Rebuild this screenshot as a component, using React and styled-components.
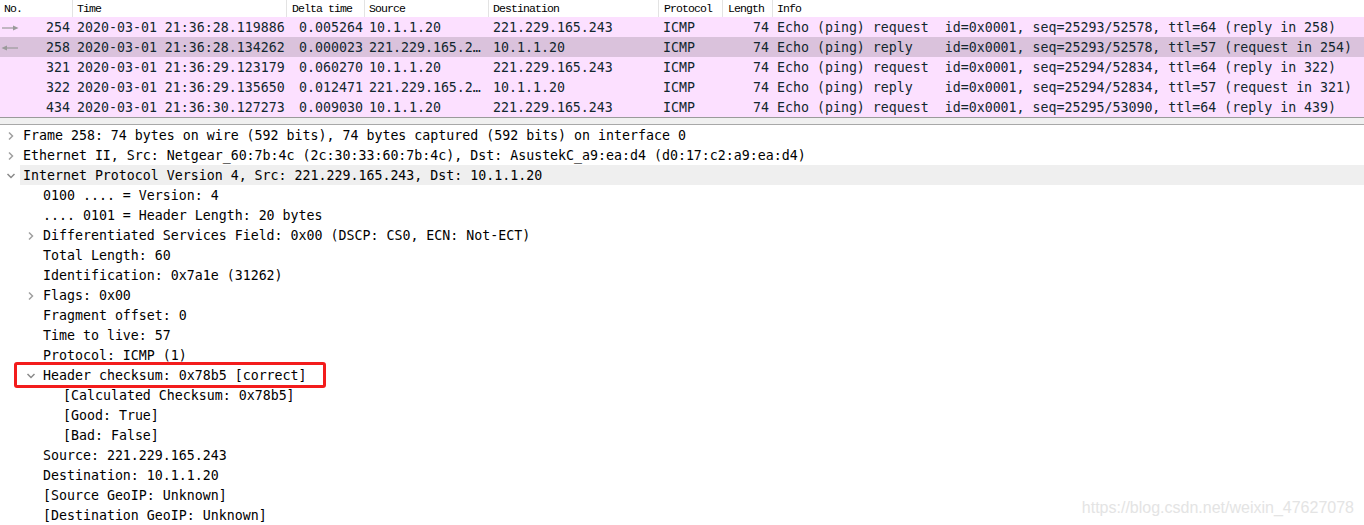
import React from "react";
import styled, { createGlobalStyle } from "styled-components";

const Global = createGlobalStyle`
  html, body { margin: 0; padding: 0; background: #ffffff; }
  body { width: 1364px; height: 525px; overflow: hidden; }
  #root { width: 1364px; height: 525px; }
`;

const Page = styled.div`
  position: relative;
  width: 1364px;
  height: 525px;
  display: flex;
  flex-direction: column;
  background: #ffffff;
  overflow: hidden;
`;

const COLS = "73px 214px 78px 124px 170px 64px 50px 1fr";

const ListPane = styled.div`
  display: flex;
  flex-direction: column;
  border-bottom: 1px solid #9a9a9a;
  background: #ffffff;
`;

const HeaderRow = styled.div`
  display: grid;
  grid-template-columns: ${COLS};
  height: 17px;
  background: #ffffff;
`;

const HeaderCell = styled.div`
  font-family: "Liberation Mono", monospace;
  font-size: 11.5px;
  letter-spacing: -0.9px;
  line-height: 17px;
  color: #000;
  padding-left: ${(p) => p.$pl ?? 4}px;
  border-right: ${(p) => (p.$last ? "none" : "1px solid #e3e3e3")};
  white-space: nowrap;
  overflow: hidden;
`;

const PacketRow = styled.div`
  display: grid;
  grid-template-columns: ${COLS};
  height: 20px;
  background: ${(p) => (p.$selected ? "#dac2dc" : "#fce0ff")};
  color: #12272e;
  font-family: "DejaVu Sans Mono", monospace;
  font-size: 13.28px;
  line-height: 22px;
`;

const Cell = styled.div`
  white-space: pre;
  overflow: hidden;
  text-overflow: ellipsis;
  text-align: ${(p) => (p.$right ? "right" : "left")};
  padding: 0 ${(p) => p.$pr ?? 4}px 0 ${(p) => p.$pl ?? 4}px;
`;

const NoCell = styled.div`
  display: flex;
  align-items: center;
  justify-content: space-between;
  padding: 0 3px 0 1px;
`;

const Splitter = styled.div`
  height: 7px;
  background: #f0f0f0;
  border-bottom: 1px solid #a8a8a8;
`;

const DetailPane = styled.div`
  display: flex;
  flex-direction: column;
  background: #ffffff;
  font-family: "DejaVu Sans Mono", monospace;
  font-size: 13.28px;
  color: #000;
`;

const TreeRow = styled.div`
  position: relative;
  display: flex;
  height: 20px;
  line-height: 22px;
  padding-left: ${(p) => p.$level * 20}px;
`;

const Toggle = styled.div`
  width: 20px;
  flex: none;
  display: flex;
  align-items: center;
  justify-content: center;
  padding: 1px 0 0 1px;
  box-sizing: border-box;
`;

const Label = styled.div`
  flex: 1;
  padding-left: 3px;
  white-space: pre;
  background: ${(p) => (p.$hl ? "#efefef" : "transparent")};
`;

const Callout = styled.div`
  position: absolute;
  left: 14px;
  top: -3px;
  width: 312px;
  height: 26px;
  box-sizing: border-box;
  border: 3px solid #f31c1c;
  border-radius: 3px;
  pointer-events: none;
`;

const Watermark = styled.div`
  position: absolute;
  right: 10px;
  bottom: 8px;
  font-family: "Liberation Sans", Arial, sans-serif;
  font-size: 16px;
  color: #e4e4e4;
`;

const Arrow = ({ dir }) => (
  <svg width="18" height="8" viewBox="0 0 18 8">
    {dir === "right" ? (
      <>
        <line x1="1" y1="4" x2="14" y2="4" stroke="#9a9a9a" strokeWidth="1.2" />
        <polygon points="12,1.5 17.5,4 12,6.5" fill="#9a9a9a" />
      </>
    ) : (
      <>
        <line x1="4" y1="4" x2="17" y2="4" stroke="#9a9a9a" strokeWidth="1.2" />
        <polygon points="6,1.5 0.5,4 6,6.5" fill="#9a9a9a" />
      </>
    )}
  </svg>
);

const Chevron = ({ open }) => (
  <svg width="10" height="10" viewBox="0 0 10 10">
    {open ? (
      <polyline points="1.5,3 5,6.5 8.5,3" fill="none" stroke="#8a8a8a" strokeWidth="1.5" />
    ) : (
      <polyline points="3,1.5 6.5,5 3,8.5" fill="none" stroke="#a0a0a0" strokeWidth="1.5" />
    )}
  </svg>
);

const packets = [
  { no: 254, time: "2020-03-01 21:36:28.119886", delta: "0.005264", src: "10.1.1.20", dst: "221.229.165.243", len: 74, info: "Echo (ping) request  id=0x0001, seq=25293/52578, ttl=64 (reply in 258)", arrow: "right" },
  { no: 258, time: "2020-03-01 21:36:28.134262", delta: "0.000023", src: "221.229.165.243", dst: "10.1.1.20", len: 74, info: "Echo (ping) reply    id=0x0001, seq=25293/52578, ttl=57 (request in 254)", arrow: "left", selected: true },
  { no: 321, time: "2020-03-01 21:36:29.123179", delta: "0.060270", src: "10.1.1.20", dst: "221.229.165.243", len: 74, info: "Echo (ping) request  id=0x0001, seq=25294/52834, ttl=64 (reply in 322)" },
  { no: 322, time: "2020-03-01 21:36:29.135650", delta: "0.012471", src: "221.229.165.243", dst: "10.1.1.20", len: 74, info: "Echo (ping) reply    id=0x0001, seq=25294/52834, ttl=57 (request in 321)" },
  { no: 434, time: "2020-03-01 21:36:30.127273", delta: "0.009030", src: "10.1.1.20", dst: "221.229.165.243", len: 74, info: "Echo (ping) request  id=0x0001, seq=25295/53090, ttl=64 (reply in 439)" },
];

const tree = [
  { l: 0, t: "Frame 258: 74 bytes on wire (592 bits), 74 bytes captured (592 bits) on interface 0", c: "closed" },
  { l: 0, t: "Ethernet II, Src: Netgear_60:7b:4c (2c:30:33:60:7b:4c), Dst: AsustekC_a9:ea:d4 (d0:17:c2:a9:ea:d4)", c: "closed" },
  { l: 0, t: "Internet Protocol Version 4, Src: 221.229.165.243, Dst: 10.1.1.20", c: "open", hl: true },
  { l: 1, t: "0100 .... = Version: 4" },
  { l: 1, t: ".... 0101 = Header Length: 20 bytes" },
  { l: 1, t: "Differentiated Services Field: 0x00 (DSCP: CS0, ECN: Not-ECT)", c: "closed" },
  { l: 1, t: "Total Length: 60" },
  { l: 1, t: "Identification: 0x7a1e (31262)" },
  { l: 1, t: "Flags: 0x00", c: "closed" },
  { l: 1, t: "Fragment offset: 0" },
  { l: 1, t: "Time to live: 57" },
  { l: 1, t: "Protocol: ICMP (1)" },
  { l: 1, t: "Header checksum: 0x78b5 [correct]", c: "open", callout: true },
  { l: 2, t: "[Calculated Checksum: 0x78b5]" },
  { l: 2, t: "[Good: True]" },
  { l: 2, t: "[Bad: False]" },
  { l: 1, t: "Source: 221.229.165.243" },
  { l: 1, t: "Destination: 10.1.1.20" },
  { l: 1, t: "[Source GeoIP: Unknown]" },
  { l: 1, t: "[Destination GeoIP: Unknown]" },
];

export default function App() {
  return (
    <Page>
      <Global />
      <ListPane>
        <HeaderRow>
          <HeaderCell>No.</HeaderCell>
          <HeaderCell>Time</HeaderCell>
          <HeaderCell $pl={5}>Delta time</HeaderCell>
          <HeaderCell>Source</HeaderCell>
          <HeaderCell>Destination</HeaderCell>
          <HeaderCell $pl={5}>Protocol</HeaderCell>
          <HeaderCell $pl={5}>Length</HeaderCell>
          <HeaderCell $last>Info</HeaderCell>
        </HeaderRow>
        {packets.map((p) => (
          <PacketRow key={p.no} $selected={p.selected}>
            <NoCell>
              <span>{p.arrow ? <Arrow dir={p.arrow} /> : null}</span>
              <span>{p.no}</span>
            </NoCell>
            <Cell $pr={0}>{p.time}</Cell>
            <Cell $right $pr={2}>{p.delta}</Cell>
            <Cell>{p.src}</Cell>
            <Cell>{p.dst}</Cell>
            <Cell>ICMP</Cell>
            <Cell $right>{p.len}</Cell>
            <Cell>{p.info}</Cell>
          </PacketRow>
        ))}
      </ListPane>
      <Splitter />
      <DetailPane>
        {tree.map((n, i) => (
          <TreeRow key={i} $level={n.l}>
            <Toggle>{n.c ? <Chevron open={n.c === "open"} /> : null}</Toggle>
            <Label $hl={n.hl}>{n.t}</Label>
            {n.callout ? <Callout /> : null}
          </TreeRow>
        ))}
      </DetailPane>
      <Watermark>https://blog.csdn.net/weixin_47627078</Watermark>
    </Page>
  );
}
